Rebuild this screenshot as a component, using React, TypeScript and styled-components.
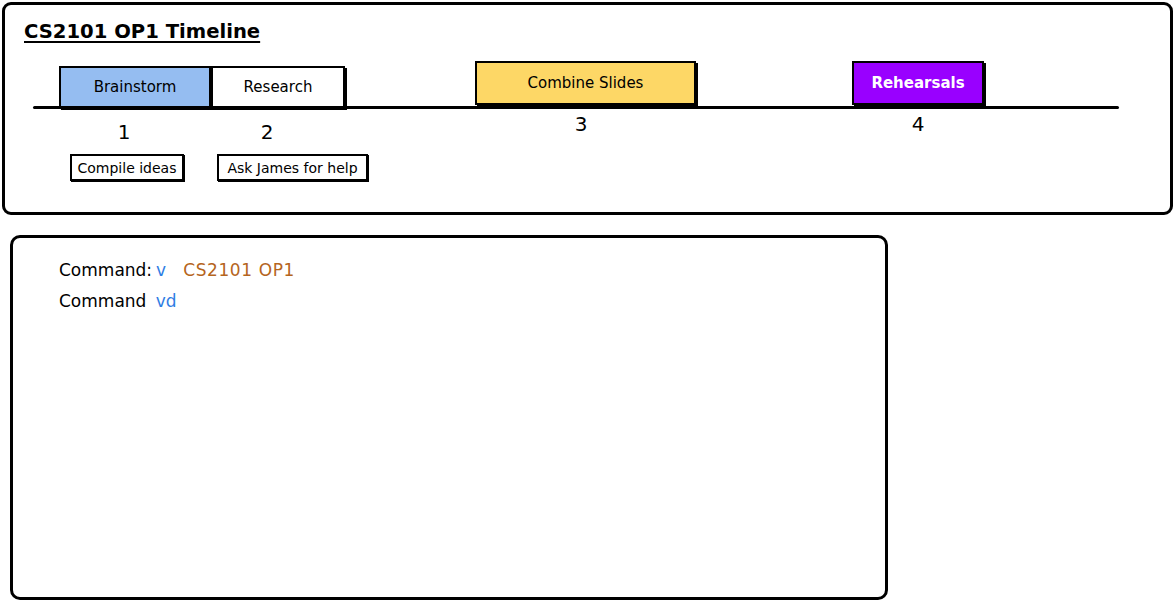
import React from 'react'
import styled, { createGlobalStyle } from 'styled-components'

type Stage = {
  label: string
  num: string
  width: number
  height: number
  gapLeft: number
  top: number
  bg: string
  fg?: string
  bold?: boolean
  numGap: number
  nudge: number
  note?: { text: string; left: number; width: number }
}

const stages: Stage[] = [
  {
    label: 'Brainstorm', num: '1', width: 152, height: 42, gapLeft: 26, top: 5,
    bg: '#95bdf1', numGap: 12, nudge: 22,
    note: { text: 'Compile ideas', left: 11, width: 114 },
  },
  {
    label: 'Research', num: '2', width: 134, height: 42, gapLeft: 0, top: 5,
    bg: '#ffffff', numGap: 12, nudge: 22,
    note: { text: 'Ask James for help', left: 6, width: 151 },
  },
  {
    label: 'Combine Slides', num: '3', width: 221, height: 44, gapLeft: 130, top: 0,
    bg: '#fdd766', numGap: 7, nudge: 9,
  },
  {
    label: 'Rehearsals', num: '4', width: 132, height: 44, gapLeft: 156, top: 0,
    bg: '#9900ff', fg: '#ffffff', bold: true, numGap: 7, nudge: 0,
  },
]

const App: React.FC = () => {
  return (
    <Page>
      <GlobalStyle />
      <TimelinePanel>
        <Title>CS2101 OP1 Timeline</Title>
        <Track>
          { stages.map((s, i) =>
            <StageCol key={ i } $gapLeft={ s.gapLeft } $width={ s.width }>
              <Block
                $top={ s.top }
                $height={ s.height }
                $bg={ s.bg }
                $fg={ s.fg }
                $bold={ s.bold }
              >
                { s.label }
              </Block>
              <Num $gap={ s.numGap } $nudge={ s.nudge }>{ s.num }</Num>
              { s.note &&
                <Note $left={ s.note.left } $width={ s.note.width }>
                  { s.note.text }
                </Note>
              }
            </StageCol>
          ) }
        </Track>
      </TimelinePanel>
      <ConsolePanel>
        <Line>
          Command:<Cmd>v</Cmd><Arg>CS2101 OP1</Arg>
        </Line>
        <Line>
          Command <Cmd>vd</Cmd>
        </Line>
      </ConsolePanel>
    </Page>
  )
}

const GlobalStyle = createGlobalStyle`
  html, body {
    margin: 0;
    padding: 0;
    background: #ffffff;
  }
  body {
    font-family: "DejaVu Sans", "Liberation Sans", sans-serif;
    color: #000000;
  }
`

const Page = styled.div`
  width: 1176px;
  height: 602px;
  display: flex;
  flex-direction: column;
  align-items: flex-start;
  padding: 2px 0 0 2px;
  box-sizing: border-box;
`

const TimelinePanel = styled.div`
  width: 1171px;
  height: 213px;
  box-sizing: border-box;
  border: 3px solid #000;
  border-radius: 9px;
  padding: 14px 0 0 19px;
  display: flex;
  flex-direction: column;
`

const Title = styled.div`
  font-size: 19.6px;
  font-weight: 700;
  line-height: 26px;
  text-decoration: underline;
  text-decoration-thickness: 2px;
  text-underline-offset: 3px;
`

const Track = styled.div`
  position: relative;
  margin: 16px 0 0 9px;
  width: 1086px;
  display: flex;
  align-items: flex-start;

  &::before {
    content: '';
    position: absolute;
    left: 0;
    right: 0;
    top: 45px;
    height: 3px;
    border-radius: 2px;
    background: #000;
  }
`

const StageCol = styled.div<{ $gapLeft: number; $width: number }>`
  margin-left: ${ p => p.$gapLeft }px;
  width: ${ p => p.$width }px;
  display: flex;
  flex-direction: column;
  align-items: stretch;
`

const Block = styled.div<{ $top: number; $height: number; $bg: string; $fg?: string; $bold?: boolean }>`
  position: relative;
  margin-top: ${ p => p.$top }px;
  height: ${ p => p.$height }px;
  box-sizing: border-box;
  background: ${ p => p.$bg };
  color: ${ p => p.$fg ?? '#000' };
  border: 2px solid #000;
  box-shadow: 2px 2px 0 #000;
  display: flex;
  align-items: center;
  justify-content: center;
  font-size: 15px;
  font-weight: ${ p => (p.$bold ? 700 : 400) };
`

const Num = styled.div<{ $gap: number; $nudge: number }>`
  margin-top: ${ p => p.$gap }px;
  padding-right: ${ p => p.$nudge }px;
  text-align: center;
  font-size: 20px;
  line-height: 24px;
`

const Note = styled.div<{ $left: number; $width: number }>`
  margin: 10px 0 0 ${ p => p.$left }px;
  width: ${ p => p.$width }px;
  height: 27px;
  box-sizing: border-box;
  border: 2px solid #000;
  box-shadow: 1px 1px 0 #000;
  display: flex;
  align-items: center;
  justify-content: center;
  white-space: nowrap;
  font-size: 14px;
`

const ConsolePanel = styled.div`
  margin: 20px 0 0 8px;
  width: 878px;
  height: 365px;
  box-sizing: border-box;
  border: 3px solid #000;
  border-radius: 10px;
  padding: 17px 0 0 46px;
  display: flex;
  flex-direction: column;
`

const Line = styled.div`
  font-size: 17px;
  line-height: 31px;
  white-space: pre;
`

const Cmd = styled.span`
  color: #2f7de4;
  margin-left: 4px;
`

const Arg = styled.span`
  color: #b5651d;
  margin-left: 17px;
  letter-spacing: 0.6px;
`

export default App
